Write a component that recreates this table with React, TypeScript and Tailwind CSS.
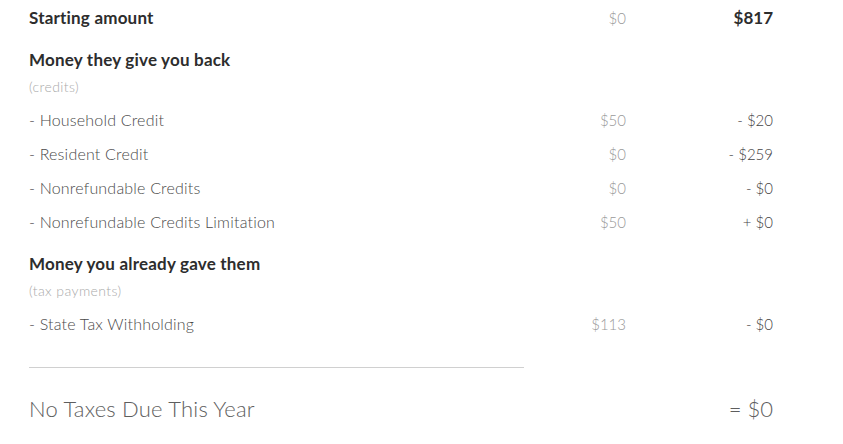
const font = { fontFamily: 'Lato, "Open Sans", sans-serif' };

type Line = { label: string; mid: string; right: string };

const credits: Line[] = [
  { label: '- Household Credit', mid: '$50', right: '- $20' },
  { label: '- Resident Credit', mid: '$0', right: '- $259' },
  { label: '- Nonrefundable Credits', mid: '$0', right: '- $0' },
  { label: '- Nonrefundable Credits Limitation', mid: '$50', right: '+ $0' },
];

const payments: Line[] = [{ label: '- State Tax Withholding', mid: '$113', right: '- $0' }];

const Row = ({ line }: { line: Line }) => (
  <div className="grid grid-cols-[1fr_80px_147px] items-center h-[34px] text-[15px] font-light">
    <span className="text-[16px] tracking-[0.2px] text-[#4a4a4a]">{line.label}</span>
    <span className="text-right text-[#999]">{line.mid}</span>
    <span className="text-right text-[#444]">{line.right}</span>
  </div>
);

export default function App() {
  return (
    <div className="w-[843px] h-[444px] bg-white overflow-hidden" style={font}>
      <div className="ml-[29px] w-[744px] flex flex-col">
        <div className="grid grid-cols-[1fr_80px_147px] items-center h-[36px]">
          <span className="text-[17px] tracking-[0.2px] font-bold text-[#2d2d2d]">Starting amount</span>
          <span className="text-right text-[15px] font-light text-[#999]">$0</span>
          <span className="text-right text-[17px] font-bold text-[#2d2d2d]">$817</span>
        </div>

        <div className="mt-[12px] h-[24px] flex items-center text-[17px] tracking-[0.2px] font-bold text-[#2d2d2d]">
          Money they give you back
        </div>
        <div className="mt-[4px] h-[20px] flex items-center text-[14px] tracking-[0.4px] font-light text-[#aaa]">
          (credits)
        </div>

        <div className="mt-[7px] flex flex-col">
          {credits.map((c) => (
            <Row key={c.label} line={c} />
          ))}
        </div>

        <div className="mt-[13px] h-[24px] flex items-center text-[17px] tracking-[0.2px] font-bold text-[#2d2d2d]">
          Money you already gave them
        </div>
        <div className="mt-[4px] h-[20px] flex items-center text-[14px] tracking-[0.4px] font-light text-[#aaa]">
          (tax payments)
        </div>

        <div className="mt-[7px] flex flex-col">
          {payments.map((c) => (
            <Row key={c.label} line={c} />
          ))}
        </div>

        <div className="mt-[26px] w-[495px] border-t border-[#d0d0d0]" />

        <div className="mt-[25px] h-[30px] flex items-center justify-between text-[22px] font-light text-[#5e5e5e]">
          <span className="tracking-[0.2px]">No Taxes Due This Year</span>
          <span>= $0</span>
        </div>
      </div>
    </div>
  );
}
